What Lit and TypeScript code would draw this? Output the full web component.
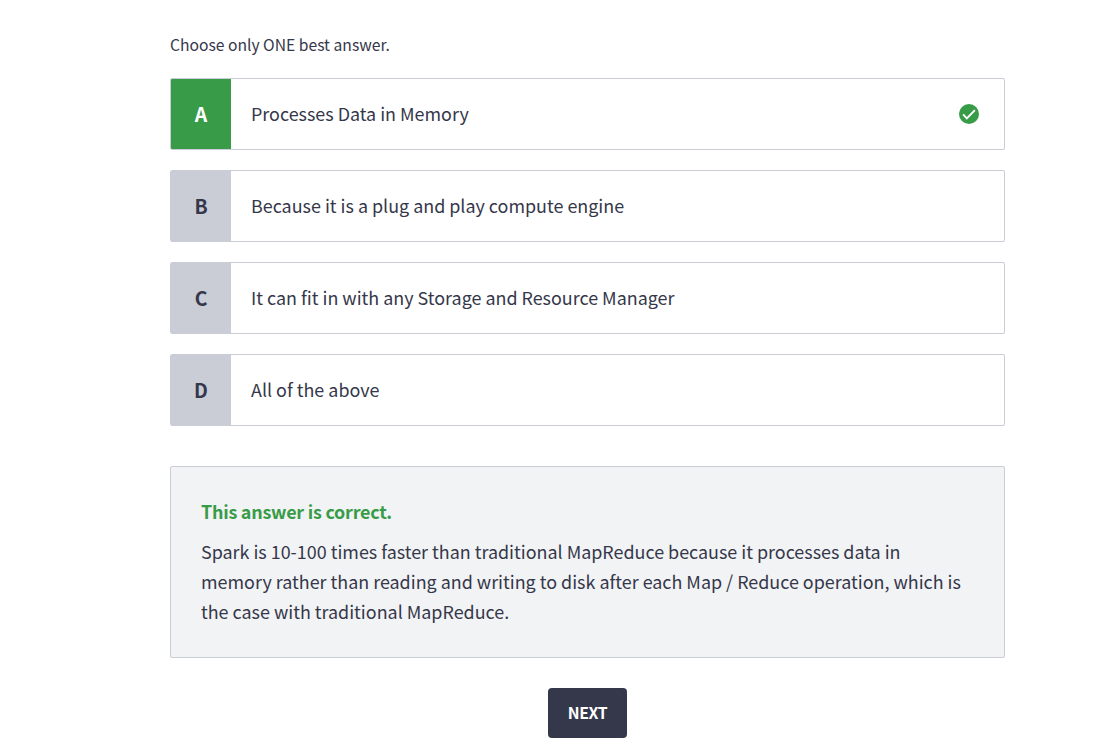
import { LitElement, html, css } from "lit";
import { customElement } from "lit/decorators.js";

const options = [
  { key: "A", text: "Processes Data in Memory", correct: true },
  { key: "B", text: "Because it is a plug and play compute engine", correct: false },
  { key: "C", text: "It can fit in with any Storage and Resource Manager", correct: false },
  { key: "D", text: "All of the above", correct: false },
];

@customElement("app-root")
export class AppRoot extends LitElement {
  static styles = css`
    :host { display: block; height: 742px; overflow: hidden; background: #fff; color: #35374a;
      font-family: "Noto Sans CJK SC", sans-serif; font-size: 17.91px; }
    .quiz { width: 835px; margin-left: 170px; padding-top: 35px; display: flex; flex-direction: column; }
    .hint { font-size: 15.67px; line-height: 20px; margin: 0 0 23px; }
    .options { display: flex; flex-direction: column; gap: 20px; }
    .option { box-sizing: border-box; height: 72px; display: flex; align-items: stretch; border: 1px solid #caccd6; border-radius: 2px; overflow: hidden; line-height: 26px; }
    .key { box-sizing: border-box; width: 60px; display: flex; align-items: center; justify-content: center; background: #caccd6; font-size: 19.4px; font-weight: 700; }
    .option.correct .key { background: #389b48; color: #fff; }
    .label { flex: 1; display: flex; align-items: center; padding: 0 0 2px 20px; }
    .check { align-self: center; width: 20px; height: 20px; margin-right: 25px; }
    .feedback { box-sizing: border-box; height: 192px; margin-top: 40px; padding: 29px 30px; border: 1px solid #caccd6; border-radius: 2px; background: #f2f3f5; line-height: 30px; }
    .title { color: #389b48; font-weight: 700; letter-spacing: -0.23px; margin: 0 0 10px; }
    .body { margin: 0; white-space: nowrap; }
    .next { align-self: center; box-sizing: border-box; width: 79px; height: 50px; margin-top: 30px; padding: 0 0 2px; border: 0; border-radius: 4px; background: #35374a; color: #fff; font: inherit; font-size: 15.8px; font-weight: 700; letter-spacing: -0.4px; }
  `;
  render() {
    return html`<main class="quiz">
      <p class="hint">Choose only ONE best answer.</p>
      <div class="options">
        ${options.map((o) => html`<div class="option ${o.correct ? "correct" : ""}">
          <div class="key"><span>${o.key}</span></div>
          <div class="label"><span>${o.text}</span></div>
          ${o.correct ? html`<svg class="check" viewBox="0 0 20 20"><circle cx="10" cy="10" r="10" fill="#389b48"/><path d="M4.1 10.3l3.7 4L15.9 6.1" fill="none" stroke="#fff" stroke-width="1.9"/></svg>` : ""}
        </div>`)}
      </div>
      <section class="feedback">
        <p class="title">This answer is correct.</p>
        <p class="body">Spark is 10-100 times faster than traditional MapReduce because it processes data in<br>memory rather than reading and writing to disk after each Map / Reduce operation, which is<br>the case with traditional MapReduce.</p>
      </section>
      <button class="next">NEXT</button>
    </main>`;
  }
}
